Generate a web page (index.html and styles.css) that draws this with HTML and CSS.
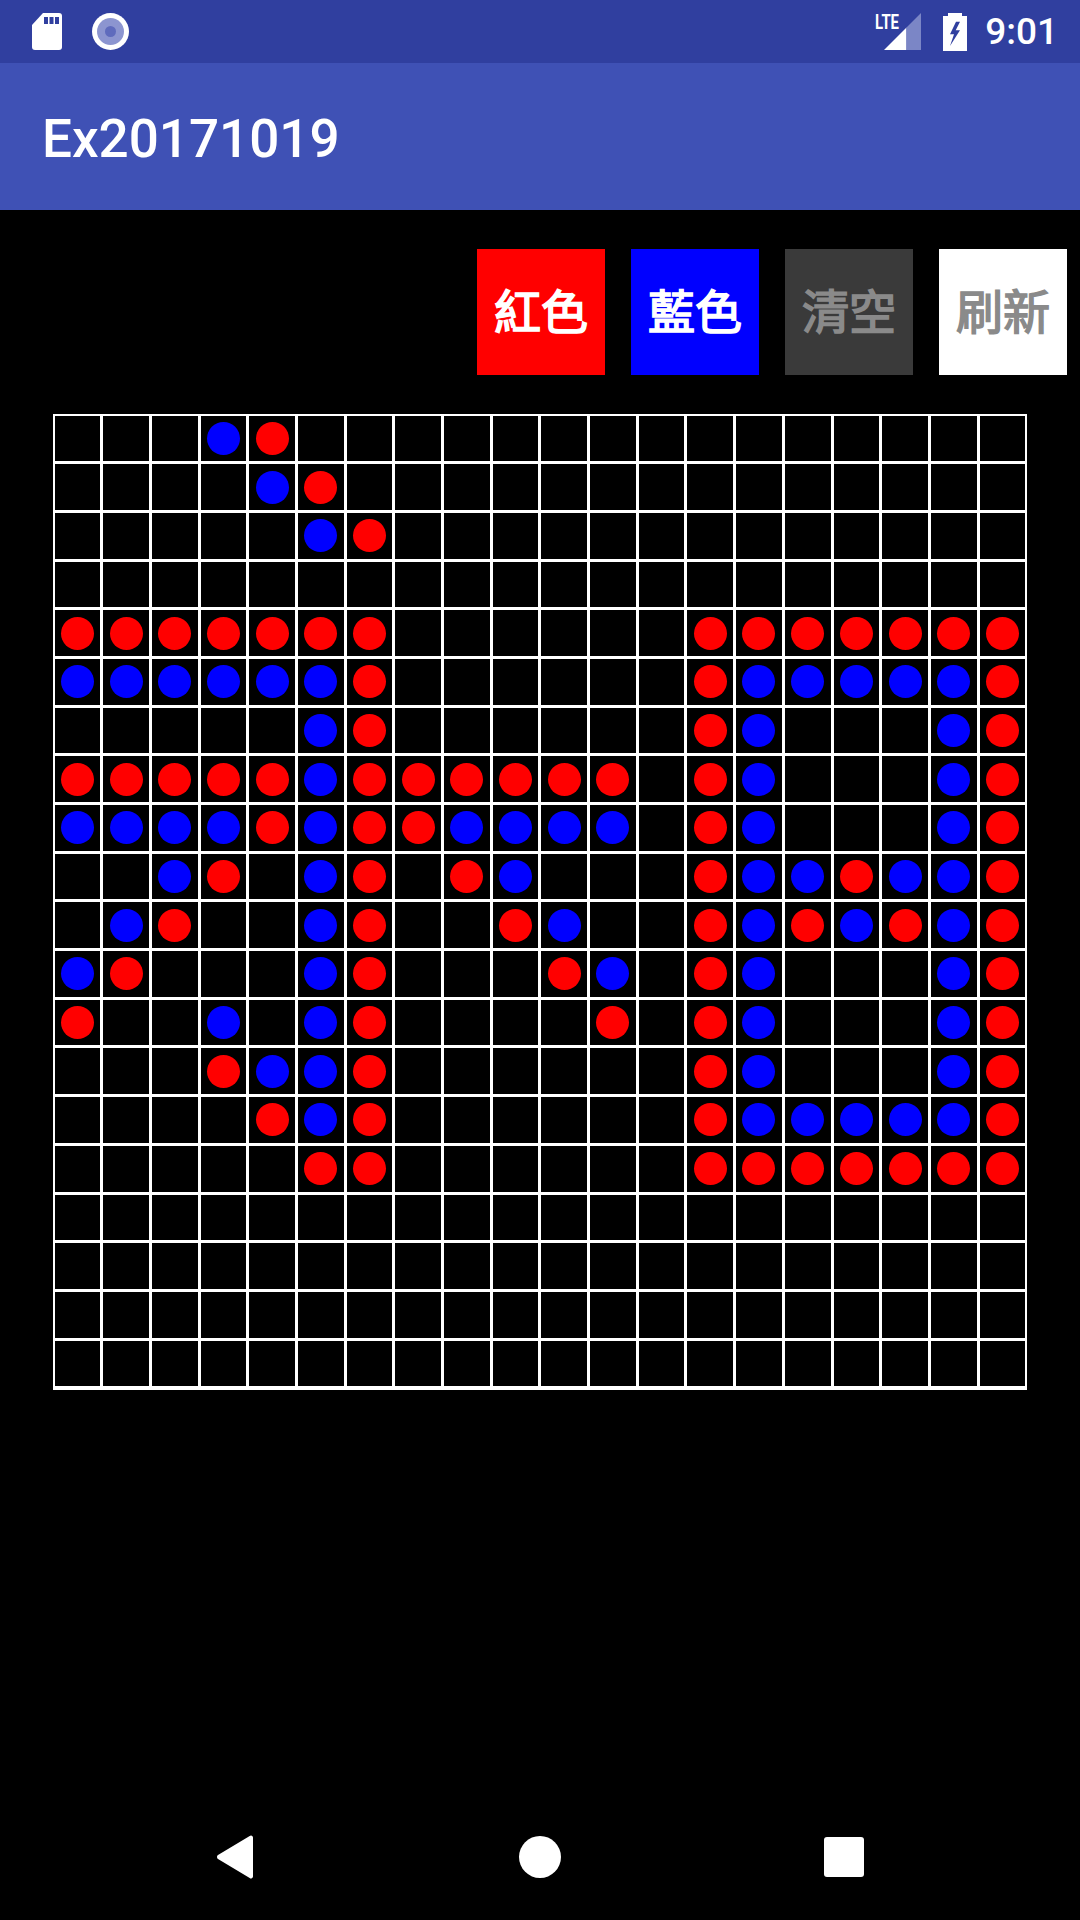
FILE: index.html

```html
<!DOCTYPE html>
<html lang="zh-Hant">
<head>
    <meta charset="UTF-8">
    <meta name="viewport" content="width=device-width, initial-scale=1.0">
    <title>Ex20171019</title>
    <link rel="stylesheet" href="styles.css">
</head>
<body>
    <div class="phone">
        <div class="status-bar">
            <svg class="icon-sd" viewBox="0 0 30 37">
                <path fill="#fff" d="M11 0H27a3 3 0 0 1 3 3V34a3 3 0 0 1-3 3H3a3 3 0 0 1-3-3V12Z"/>
                <path fill="#303f9f" d="M12 4h4v7h-4zM17.5 4h4v7h-4zM23 4h4v7h-4z"/>
            </svg>
            <svg class="icon-record" viewBox="0 0 37 37">
                <circle cx="18.5" cy="18.5" r="18.5" fill="#fff"/>
                <circle cx="18.5" cy="18.5" r="13.5" fill="#8c95d0"/>
                <circle cx="18.5" cy="18.5" r="5.5" fill="#5f6bbd"/>
            </svg>
            <div class="status-right">
                <svg class="icon-signal" viewBox="0 -4 46 41">
                    <text class="lte" x="0" y="16" textLength="24" lengthAdjust="spacingAndGlyphs">LTE</text>
                    <path fill="#fff" d="M9 37H31.500V14.500Z"/>
                    <path fill="#7b86c6" d="M31.500 14.500L46 0V37H31.500Z"/>
                </svg>
                <svg class="icon-battery" viewBox="0 0 24 38">
                    <path fill="#fff" d="M5 0H19V3H24V38H0V3H5Z"/>
                    <path fill="#303f9f" d="M13 8.700L7 21.300H11L7 33L17 17.300H12.700L17 8.700Z"/>
                </svg>
                <span class="clock">9:01</span>
            </div>
        </div>

        <div class="app-bar">Ex20171019</div>

        <div class="toolbar">
            <button class="btn btn-red">紅色</button>
            <button class="btn btn-blue">藍色</button>
            <button class="btn btn-clear">清空</button>
            <button class="btn btn-refresh">刷新</button>
        </div>

        <div class="board" id="board"></div>

        <div class="nav-bar">
            <svg class="nav-icon" viewBox="0 0 48 48">
                <path fill="#fff" d="M41 4.500V43.500a2 2 0 0 1-3.300 1.500L6 26a2.500 2.500 0 0 1 0-4L37.700 3a2 2 0 0 1 3.300 1.500Z"/>
            </svg>
            <svg class="nav-icon" viewBox="0 0 48 48">
                <circle cx="24" cy="24" r="21" fill="#fff"/>
            </svg>
            <svg class="nav-icon" viewBox="0 0 48 48">
                <rect x="4" y="4" width="40" height="40" rx="3" fill="#fff"/>
            </svg>
        </div>
    </div>

    <script src="script.js"></script>
</body>
</html>
```

FILE: styles.css

```css
body {
    margin: 0;
    padding: 0;
    background-color: #000;
    font-family: Roboto, "Noto Sans CJK TC", sans-serif;
}
.phone {
    display: flex;
    flex-direction: column;
    width: 1080px;
    height: 1920px;
    overflow: hidden;
}
.status-bar {
    display: flex;
    align-items: center;
    flex: none;
    height: 63px;
    padding: 0 22px 0 32px;
    gap: 30px;
    background: #303f9f;
}
.icon-sd {
    width: 30px;
    height: 37px;
}
.icon-record {
    width: 37px;
    height: 37px;
}
.status-right {
    display: flex;
    align-items: center;
    margin-left: auto;
}
.icon-signal {
    width: 46px;
    height: 41px;
    margin: 0 22px 4px 0;
}
.lte {
    fill: #fff;
    font-family: Roboto, sans-serif;
    font-size: 21px;
    font-weight: 700;
}
.icon-battery {
    width: 24px;
    height: 38px;
    margin-right: 18px;
}
.clock {
    color: #fff;
    font-size: 37px;
    font-weight: 500;
    line-height: 63px;
}
.app-bar {
    flex: none;
    box-sizing: border-box;
    height: 147px;
    padding: 6px 0 0 42px;
    background: #3f51b5;
    color: #fff;
    font-size: 53px;
    font-weight: 500;
    line-height: 140px;
}
.toolbar {
    display: flex;
    justify-content: flex-end;
    flex: none;
    gap: 26px;
    padding: 39px 13px 0 0;
}
.btn {
    width: 128px;
    height: 126px;
    padding: 0 0 7px;
    border: none;
    font-family: "Noto Sans CJK TC", sans-serif;
    font-size: 47px;
    font-weight: 400;
    -webkit-text-stroke: 1.6px currentColor;
}
.btn-red {
    background: #f00;
    color: #fff;
}
.btn-blue {
    background: #00f;
    color: #fff;
}
.btn-clear {
    background: #3a3a3a;
    color: #8a8a8a;
}
.btn-refresh {
    background: #fff;
    color: #8a8a8a;
}
.board {
    display: grid;
    grid-template-columns: repeat(20, 45.7px);
    grid-template-rows: repeat(20, 45.7px);
    gap: 3px;
    flex: none;
    box-sizing: border-box;
    width: 974px;
    height: 976px;
    margin: 39px 0 0 53px;
    padding: 1.5px 1.5px 3.5px;
    background: #fff;
}
.cell {
    display: flex;
    align-items: center;
    justify-content: center;
    background: #000;
}
.piece {
    width: 33px;
    height: 33px;
    border-radius: 50%;
}
.red {
    background: #f00;
}
.blue {
    background: #00f;
}
.nav-bar {
    display: flex;
    align-items: center;
    justify-content: center;
    gap: 256px;
    flex: none;
    height: 126px;
    margin-top: auto;
}
.nav-icon {
    width: 48px;
    height: 48px;
}
```

FILE: script.js

```js
// r = vermelho, b = azul, . = vazio
const jogadas = [
    "...br...............",
    "....br..............",
    ".....br.............",
    "....................",
    "rrrrrrr......rrrrrrr",
    "bbbbbbr......rbbbbbr",
    ".....br......rb...br",
    "rrrrrbrrrrrr.rb...br",
    "bbbbrbrrbbbb.rb...br",
    "..br.br.rb...rbbrbbr",
    ".br..br..rb..rbrbrbr",
    "br...br...rb.rb...br",
    "r..b.br....r.rb...br",
    "...rbbr......rb...br",
    "....rbr......rbbbbbr",
    ".....rr......rrrrrrr",
    "....................",
    "....................",
    "....................",
    "...................."
];

const board = document.getElementById("board");

jogadas.forEach(linha => {
    for (const casa of linha) {
        const cell = document.createElement("div");
        cell.className = "cell";
        if (casa !== ".") {
            const piece = document.createElement("div");
            piece.className = "piece " + (casa === "r" ? "red" : "blue");
            cell.appendChild(piece);
        }
        board.appendChild(cell);
    }
});
```
